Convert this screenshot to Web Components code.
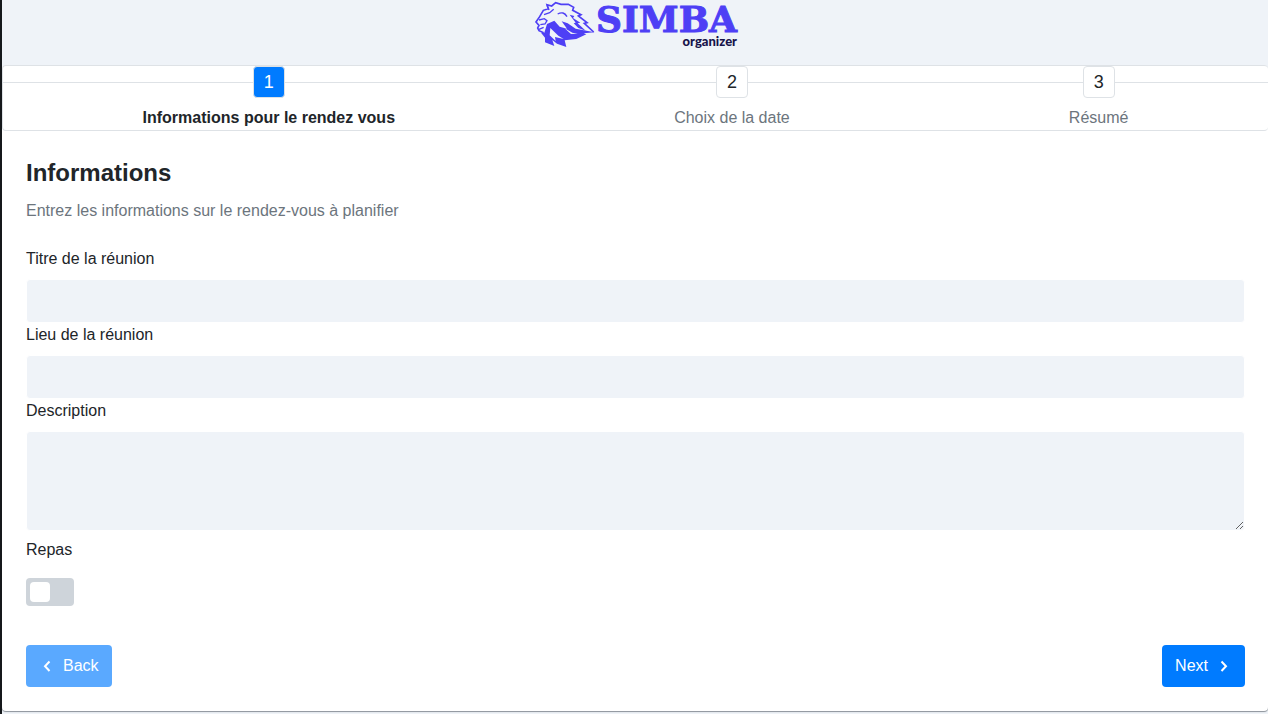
<!DOCTYPE html>
<html lang="fr">
<head>
<meta charset="utf-8">
<title>Simba organizer</title>
<style>
*{box-sizing:border-box}
body{margin:0;min-height:100vh;background:#eff3f8;border-left:2px solid #15181b;font:16px/24px "Liberation Sans",Arial,sans-serif;color:#212529}
</style>
</head>
<body>
<simba-app></simba-app>
<script>
const define = (name, html, setup) => customElements.define(name, class extends HTMLElement {
  constructor() {
    super();
    this.attachShadow({mode: 'open'}).innerHTML = '<style>*{box-sizing:border-box}:host{display:block}</style>' + html;
    if (setup) this.setup = setup;
  }
  connectedCallback() { if (this.setup) this.setup(this.shadowRoot); }
});

define('simba-logo', `
<style>
:host{display:flex;justify-content:center;height:65px}
svg{width:80px;height:56px;flex:none;margin-left:-8px}
.word{display:flex;flex-direction:column;align-items:flex-end;margin-left:-9px}
.name{font:bold 36px/38px "DejaVu Serif",serif;color:#4e3ff5;-webkit-text-stroke:1px #4e3ff5}
.sub{font:900 13px/14px Lato,sans-serif;color:#17134a;margin-top:-4px}
</style>
<svg viewBox="0 0 240 168" aria-hidden="true">
<path fill="none" stroke="#4e3ff5" stroke-width="5" d="M56 98L42 92 38 84 42 76 33 66 44 50 55 31 70 26 66 14 80 18 92 8 108 13 130 13 146 22 143 31 168 44 160 48 186 68 178 70 206 96"/>
<path fill="#4e3ff5" d="M66 72L88 62 104 80 126 86 110 64 128 70 152 86 209 97 176 100 184 103 154 117 119 121 124 141 96 131 82 120 88 138 60 127 60 113 48 98 58 98Z"/>
<path fill="#4e3ff5" d="M134 44L148 48 144 54 166 68 158 70 182 92 160 84 146 70 152 68Z"/>
<path fill="#eff3f8" d="M76 84L100 107 116 117 90 111 92 123 74 106ZM118 84L142 98 158 101 138 102Z"/>
<path fill="none" stroke="#4e3ff5" stroke-width="4" d="M42 60L58 56 66 62 60 72 46 74M57 44L74 38 86 28M98 42Q116 32 126 50M42 88L56 82M66 16L72 30"/>
</svg>
<div class="word"><span class="name">SIMBA</span><span class="sub">organizer</span></div>`);

define('wizard-step', `
<style>
:host{display:flex;flex-direction:column;align-items:center;flex:1 1 auto;color:#6c757d}
.row{display:flex;align-items:center;align-self:stretch}
.row::before,.row::after{content:"";flex:1;height:1px;background:#dee2e6}
.num{width:32px;height:32px;border:1px solid #dee2e6;border-radius:4px;background:#fff;color:#212529;font-size:18px;line-height:30px;text-align:center}
.label{margin-top:8px;white-space:nowrap}
:host([active]){color:#212529;font-weight:bold}
:host([active]) .num{background:#007bff;color:#fff;font-weight:normal}
</style>
<div class="row"><span class="num"></span></div><span class="label"><slot></slot></span>`,
function (r) { r.querySelector('.num').textContent = this.getAttribute('number'); });

define('wizard-steps', `
<style>:host{display:flex;border:1px solid #dee2e6;border-right:0;border-radius:4px;background:#fff}</style><slot></slot>`);

define('form-field', `
<style>
label{display:block;margin-bottom:8px}
input,textarea{display:block;width:100%;border:1px solid #fff;border-radius:4px;background:#eff3f8;font:inherit;color:inherit;padding:8px 12px;outline:0}
input{height:44px}
textarea{height:100px;resize:vertical}
</style><label for="f"></label>`,
function (r) {
  r.querySelector('label').textContent = this.getAttribute('label');
  const c = document.createElement(this.hasAttribute('multiline') ? 'textarea' : 'input');
  c.id = 'f';
  r.append(c);
});

define('toggle-switch', `
<style>
label{display:block;margin-bottom:16px}
input{appearance:none;display:flex;width:48px;height:28px;margin:0;padding:4px;border-radius:4px;background:#ced4da}
input::before{content:"";width:20px;height:20px;border-radius:4px;background:#fff}
input:checked{background:#007bff;justify-content:flex-end}
</style><label for="t"><slot></slot></label><input id="t" type="checkbox">`);

define('nav-button', `
<style>
button{display:flex;align-items:center;gap:8px;height:42px;border:0;border-radius:4px;padding:0 13px;background:#007bff;color:#fff;font:inherit}
button:disabled{background:#5aa9ff}
svg{width:16px;height:16px;fill:none;stroke:#fff;stroke-width:2}
:host([back]) svg{order:-1}
</style>
<button type="button"><slot></slot><svg viewBox="0 0 16 16" aria-hidden="true"><path/></svg></button>`,
function (r) {
  const back = this.hasAttribute('back');
  r.querySelector('button').disabled = back;
  r.querySelector('path').setAttribute('d', back ? 'M10.500 3.500L6 8.200L10.500 13' : 'M5.500 3.500L10 8.200L5.500 13');
});

define('simba-app', `
<style>
main{background:#fff;border-radius:4px;box-shadow:0 1px 1px #8b9299}
form{padding:24px 23px 24px 24px}
h1{margin:0 0 8px;font-size:24px;line-height:36px}
p{margin:0 0 24px;color:#6c757d}
.fields{display:grid}
toggle-switch{margin-top:7px}
nav{display:flex;justify-content:space-between;margin-top:39px}
</style>
<simba-logo></simba-logo>
<main>
<wizard-steps>
<wizard-step number="1" active>Informations pour le rendez vous</wizard-step>
<wizard-step number="2">Choix de la date</wizard-step>
<wizard-step number="3">Résumé</wizard-step>
</wizard-steps>
<form>
<h1>Informations</h1>
<p>Entrez les informations sur le rendez-vous à planifier</p>
<div class="fields">
<form-field label="Titre de la réunion"></form-field>
<form-field label="Lieu de la réunion"></form-field>
<form-field label="Description" multiline></form-field>
</div>
<toggle-switch>Repas</toggle-switch>
<nav><nav-button back>Back</nav-button><nav-button>Next</nav-button></nav>
</form>
</main>`);
</script>
</body>
</html>
